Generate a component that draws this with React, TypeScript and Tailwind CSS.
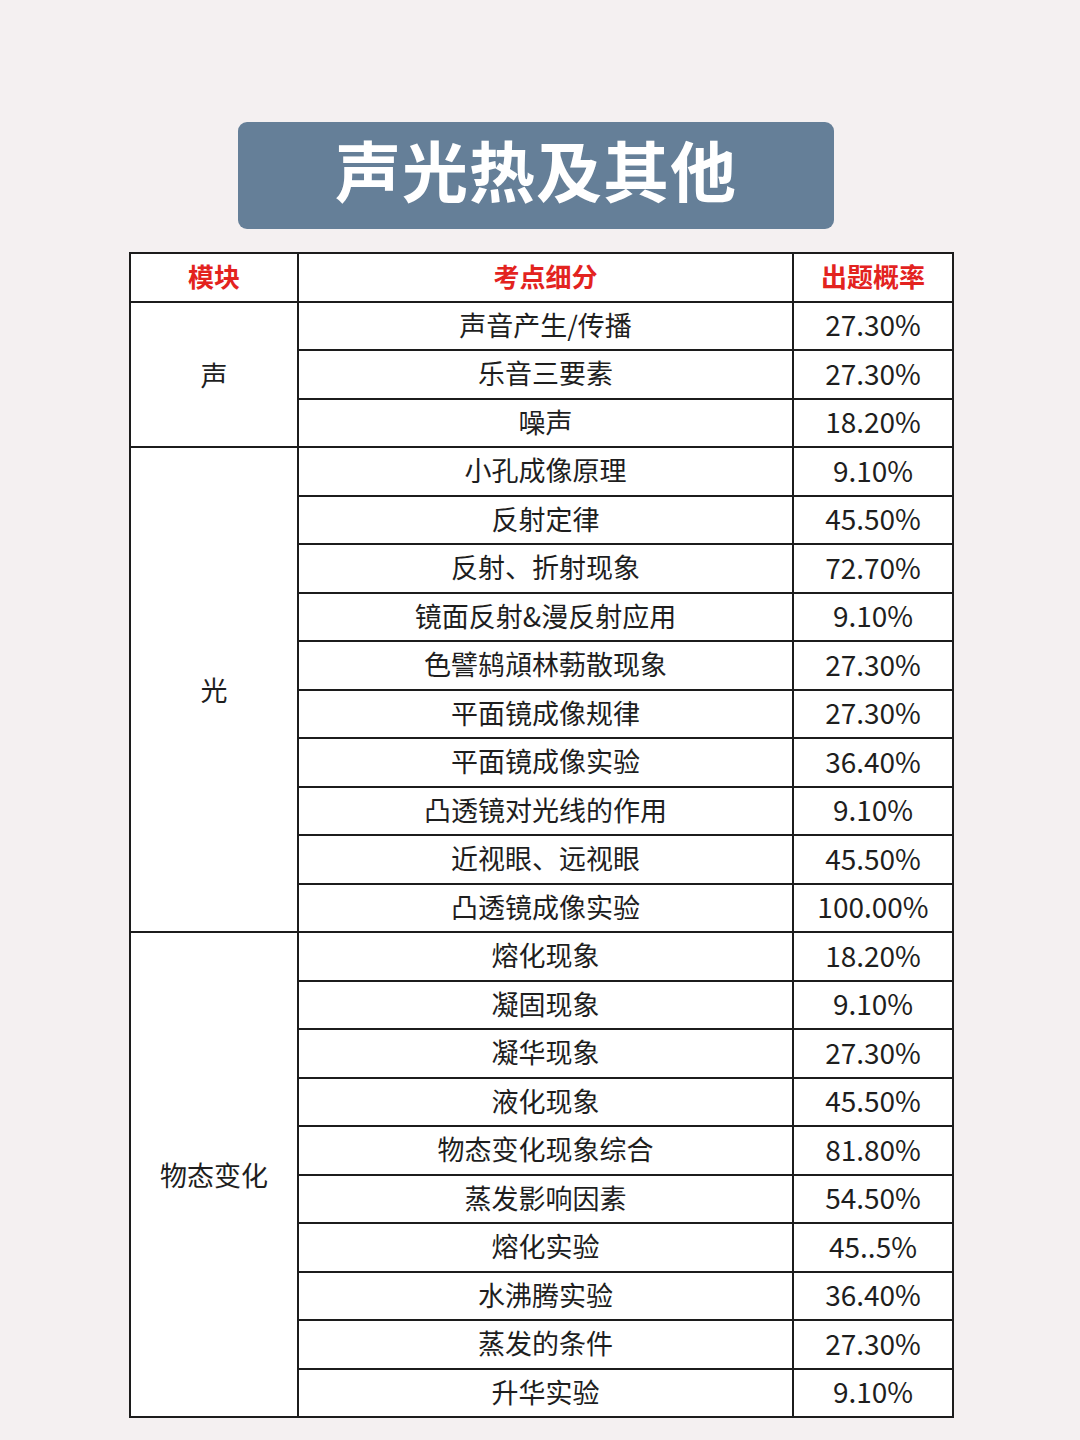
const groups: { name: string; rows: [string, string][] }[] = [
  {
    name: '声',
    rows: [
      ['声音产生/传播', '27.30%'],
      ['乐音三要素', '27.30%'],
      ['噪声', '18.20%'],
    ],
  },
  {
    name: '光',
    rows: [
      ['小孔成像原理', '9.10%'],
      ['反射定律', '45.50%'],
      ['反射、折射现象', '72.70%'],
      ['镜面反射&漫反射应用', '9.10%'],
      ['色譬鸫頏林葧散现象', '27.30%'],
      ['平面镜成像规律', '27.30%'],
      ['平面镜成像实验', '36.40%'],
      ['凸透镜对光线的作用', '9.10%'],
      ['近视眼、远视眼', '45.50%'],
      ['凸透镜成像实验', '100.00%'],
    ],
  },
  {
    name: '物态变化',
    rows: [
      ['熔化现象', '18.20%'],
      ['凝固现象', '9.10%'],
      ['凝华现象', '27.30%'],
      ['液化现象', '45.50%'],
      ['物态变化现象综合', '81.80%'],
      ['蒸发影响因素', '54.50%'],
      ['熔化实验', '45..5%'],
      ['水沸腾实验', '36.40%'],
      ['蒸发的条件', '27.30%'],
      ['升华实验', '9.10%'],
    ],
  },
];

const cell = 'border-2 border-[#1c1c1c] text-center align-middle';

export default function App() {
  return (
    <div
      className="min-h-[1440px] w-[1080px] bg-[#f4f0f1] pt-[122px]"
      style={{ fontFamily: '"Noto Sans CJK SC", "Noto Sans", sans-serif' }}
    >
      <div className="ml-[238px] flex h-[107px] w-[596px] items-center justify-center rounded-[9px] bg-[#657f98] pb-[16px]">
        <h1 className="text-[66px] font-bold leading-none tracking-[1px] text-white">声光热及其他</h1>
      </div>

      <table className="ml-[129px] mt-[23px] w-[823px] table-fixed border-collapse bg-white text-[#1e1e1e]">
        <colgroup>
          <col className="w-[168px]" />
          <col className="w-[495px]" />
          <col className="w-[160px]" />
        </colgroup>
        <thead>
          <tr className="h-[48.5px] text-[26px] font-bold text-[#e3231f]">
            <th className={`${cell} pb-[3px]`}>模块</th>
            <th className={`${cell} pb-[3px]`}>考点细分</th>
            <th className={`${cell} pb-[3px]`}>出题概率</th>
          </tr>
        </thead>
        <tbody className="text-[27px] leading-none">
          {groups.map((g) =>
            g.rows.map(([topic, rate], i) => (
              <tr key={g.name + topic} className="h-[48.5px]">
                {i === 0 && (
                  <td rowSpan={g.rows.length} className={cell}>
                    {g.name}
                  </td>
                )}
                <td className={`${cell} pb-[3px]`}>{topic}</td>
                <td className={`${cell} pb-[3px] text-[28px]`}>{rate}</td>
              </tr>
            )),
          )}
        </tbody>
      </table>
    </div>
  );
}
